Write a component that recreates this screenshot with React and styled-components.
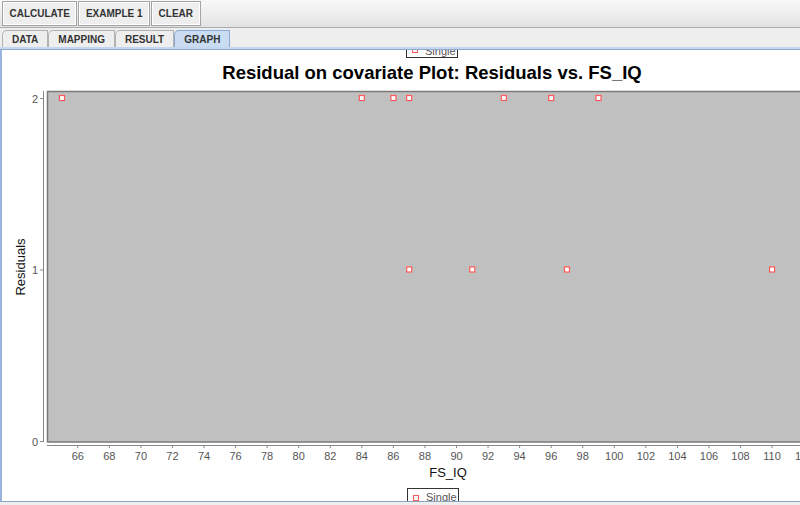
import React from 'react'
import styled, { createGlobalStyle } from 'styled-components'

const GlobalStyle = createGlobalStyle`
    html, body {
        margin: 0;
        padding: 0;
        overflow: hidden;
        background: #eeeeee;
    }
    body {
        font-family: "Liberation Sans", Arial, sans-serif;
    }
`;

const buttons = ['CALCULATE', 'EXAMPLE 1', 'CLEAR']
const tabs = ['DATA', 'MAPPING', 'RESULT', 'GRAPH']
const activeTab = 'GRAPH'

const points = [
    [65, 2], [84, 2], [86, 2], [87, 2], [93, 2], [96, 2], [99, 2],
    [87, 1], [91, 1], [97, 1], [110, 1],
]

const xTicks = []
for (let v = 66; v <= 112; v += 2) xTicks.push(v)

const px = (v) => 62 + (v - 65) * 15.78
const py = (v) => 442 - v * 171.5

const App = () => {
    return (
        <Frame>
            <GlobalStyle />
            <Toolbar>
                {buttons.map((b) => (
                    <ToolButton key={b}>{b}</ToolButton>
                ))}
            </Toolbar>
            <TabBar>
                {tabs.map((t) => (
                    <Tab key={t} active={t === activeTab}>{t}</Tab>
                ))}
            </TabBar>
            <Panel>
                <Chart width="798" height="451" viewBox="2 51 798 451">
                    {/* legend at the top, mostly hidden under the tab edge */}
                    <rect x="406.5" y="43.5" width="51" height="15" fill="#fff" stroke="#333" />
                    <rect x="412.5" y="48.5" width="5" height="5" fill="#fff" stroke="#ff5a5a" />
                    <text x="425" y="56" fontSize="11" fill="#555">Single</text>

                    <text x="432" y="80" textAnchor="middle" fontSize="18.5" fontWeight="bold" fill="#000">
                        Residual on covariate Plot: Residuals vs. FS_IQ
                    </text>

                    {/* plot area */}
                    <rect x="47.5" y="92.5" width="800" height="350.5" fill="#c0c0c0" stroke="#7a7a7a" strokeWidth="1.5" />

                    {/* y axis */}
                    <line x1="43.5" y1="92" x2="43.5" y2="443" stroke="#888" />
                    {[0, 1, 2].map((v) => (
                        <g key={v}>
                            <line x1="40" y1={py(v) + 0.5} x2="43" y2={py(v) + 0.5} stroke="#888" />
                            <text x="38" y={py(v) + 4.5} textAnchor="end" fontSize="11" fill="#555">{v}</text>
                        </g>
                    ))}
                    <text
                        x="0"
                        y="0"
                        transform="translate(25 268) rotate(-90)"
                        textAnchor="middle"
                        fontSize="13"
                        fill="#111"
                    >
                        Residuals
                    </text>

                    {/* x axis */}
                    <line x1="47" y1="446.5" x2="800" y2="446.5" stroke="#888" />
                    {xTicks.map((v) => (
                        <g key={v}>
                            <line x1={px(v)} y1="447" x2={px(v)} y2="449" stroke="#888" />
                            <text x={px(v)} y="461" textAnchor="middle" fontSize="11" fill="#555">{v}</text>
                        </g>
                    ))}
                    <text x="448" y="478" textAnchor="middle" fontSize="13" fill="#111">FS_IQ</text>

                    {/* data */}
                    {points.map(([x, y], i) => (
                        <rect
                            key={i}
                            x={px(x) - 2.5}
                            y={py(y) - 2.5}
                            width="5"
                            height="5"
                            fill="#fff"
                            stroke="#ff5a5a"
                            strokeWidth="1.2"
                        />
                    ))}

                    {/* legend at the bottom */}
                    <rect x="407.5" y="489.5" width="51" height="20" fill="#fff" stroke="#333" />
                    <rect x="413.5" y="496.5" width="5" height="5" fill="#fff" stroke="#ff5a5a" />
                    <text x="426" y="502" fontSize="11" fill="#555">Single</text>
                </Chart>
            </Panel>
        </Frame>
    )
}

export default App

const Frame = styled.div`
    width: 800px;
    height: 505px;
    display: flex;
    flex-direction: column;
    background: #eeeeee;
    overflow: hidden;
`;

const Toolbar = styled.div`
    height: 28px;
    box-sizing: border-box;
    display: flex;
    align-items: flex-start;
    gap: 1px;
    padding: 1px 2px 0;
    background: linear-gradient(180deg, #f8f8f8 0%, #ececec 60%, #e2e2e2 100%);
    border-bottom: 1px solid #a7adb3;
`;

const ToolButton = styled.button`
    height: 25px;
    padding: 0 6.5px;
    margin: 0;
    background: #eeeeee;
    border: 1px solid #a3a3a3;
    box-shadow: inset 1px 1px 0 #ffffff, inset -1px -1px 0 #ffffff;
    font-family: "Liberation Sans", Arial, sans-serif;
    font-size: 10px;
    font-weight: bold;
    color: #333333;
    cursor: pointer;
`;

const TabBar = styled.div`
    height: 19px;
    display: flex;
    align-items: flex-end;
    padding-left: 2px;
    background: #eeeeee;
    border-bottom: 2px solid #c4d7ee;
`;

const Tab = styled.div`
    height: 17px;
    box-sizing: border-box;
    display: flex;
    align-items: center;
    padding: 0 9px;
    font-size: 10px;
    font-weight: bold;
    color: #333333;
    background: ${(p) => (p.active ? '#c9dcf1' : '#eeeeee')};
    border: 1px solid ${(p) => (p.active ? '#8ca9cf' : '#b2b2b2')};
    border-bottom: none;
    border-top-left-radius: 5px;
`;

const Panel = styled.div`
    width: 800px;
    height: 451px;
    background: #ffffff;
    border-top: 1px solid #8ea9cd;
    border-left: 2px solid #98b4dc;
    border-bottom: 1px solid #8ea4c0;
    overflow: hidden;
`;

const Chart = styled.svg`
    display: block;
    font-family: "Liberation Sans", Arial, sans-serif;
`;
